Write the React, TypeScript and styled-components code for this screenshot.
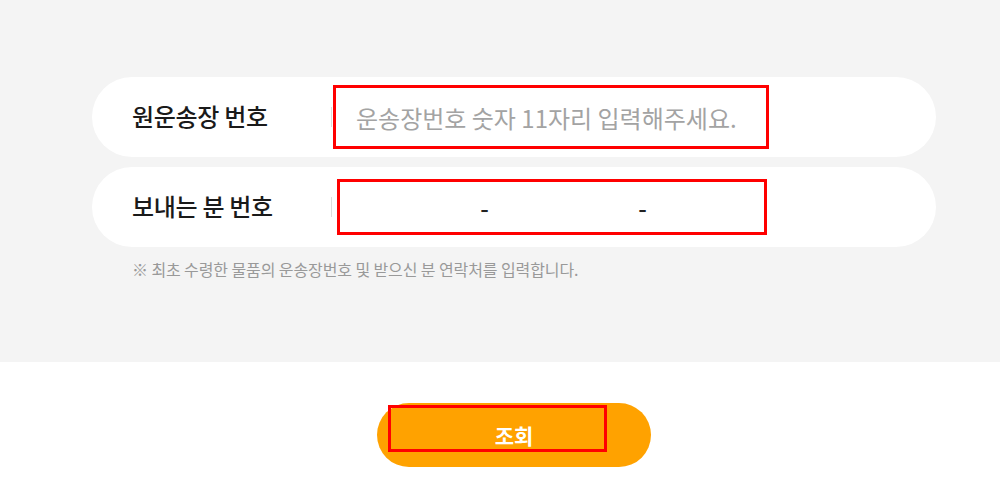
import React from 'react'
import styled, { createGlobalStyle } from 'styled-components'

const GlobalStyle = createGlobalStyle`
  body {
    margin: 0;
    background: #fff;
    font-family: "Noto Sans CJK KR", "Noto Sans", sans-serif;
  }
`

const App = () => {
  return (
    <>
      <GlobalStyle/>
      <FormSection>
        <Content>
          <Row>
            <Label>원운송장 번호</Label>
            <Divider/>
            <WaybillInput placeholder={'운송장번호 숫자 11자리 입력해주세요.'}/>
          </Row>

          <Row>
            <Label>보내는 분 번호</Label>
            <Divider/>
            <PhoneBox>
              <PhoneInput/>
              <Dash>-</Dash>
              <PhoneInput/>
              <Dash>-</Dash>
              <PhoneInput $last/>
            </PhoneBox>
          </Row>

          <Note>※ 최초 수령한 물품의 운송장번호 및 받으신 분 연락처를 입력합니다.</Note>
        </Content>
      </FormSection>

      <ButtonSection>
        <SearchButton>
          <ButtonMark/>
          조회
        </SearchButton>
      </ButtonSection>
    </>
  )
}

const FormSection = styled.div`
  background-color: #f4f4f4;
  height: 362px;
  padding-top: 77px;
  box-sizing: border-box;
`

const Content = styled.div`
  margin-left: 92px;
  width: 844px;
  display: flex;
  flex-direction: column;
  gap: 10px;
`

const Row = styled.div`
  height: 80px;
  background-color: #fff;
  border-radius: 40px;
  display: flex;
  align-items: center;
  padding-left: 40px;
`

const Label = styled.div`
  width: 199px;
  font-size: 24px;
  font-weight: 500;
  color: #1a1a1a;
  letter-spacing: -0.3px;
  margin-top: -3px;
`

const Divider = styled.div`
  width: 1px;
  height: 20px;
  background-color: #ddd;
`

const WaybillInput = styled.input`
  margin-left: 1px;
  width: 436px;
  height: 64px;
  box-sizing: border-box;
  border: 3px solid #ff0000;
  padding: 0 0 0 20px;
  font-family: "Noto Sans CJK KR", sans-serif;
  font-size: 24px;
  color: #222;
  outline: none;

  &::placeholder {
    color: #a3a3a3;
  }
`

const PhoneBox = styled.div`
  margin-left: 5px;
  width: 430px;
  height: 56px;
  box-sizing: border-box;
  border: 3px solid #ff0000;
  display: flex;
  align-items: center;
`

const PhoneInput = styled.input<{ $last?: boolean }>`
  flex: ${props => props.$last ? '1' : '0 0 131px'};
  min-width: 0;
  height: 100%;
  box-sizing: border-box;
  padding: 0;
  border: none;
  outline: none;
  background: transparent;
  text-align: center;
  font-size: 22px;
  font-family: "Noto Sans CJK KR", sans-serif;
`

const Dash = styled.span`
  width: 27px;
  text-align: center;
  font-size: 24px;
  font-weight: 500;
  color: #222;
`

const Note = styled.p`
  margin: 0 0 0 40px;
  font-size: 16px;
  letter-spacing: -0.1px;
  color: #999;
`

const ButtonSection = styled.div`
  display: flex;
  padding-top: 41px;
  padding-left: 377px;
`

const SearchButton = styled.button`
  position: relative;
  width: 274px;
  height: 64px;
  border: none;
  border-radius: 32px;
  background-color: #ffa200;
  color: #fff;
  font-family: "Noto Sans CJK KR", sans-serif;
  font-size: 21px;
  font-weight: 700;
  cursor: pointer;
`

const ButtonMark = styled.span`
  position: absolute;
  left: 11px;
  top: 2px;
  width: 219px;
  height: 47px;
  box-sizing: border-box;
  border: 3px solid #ff0000;
`

export default App
